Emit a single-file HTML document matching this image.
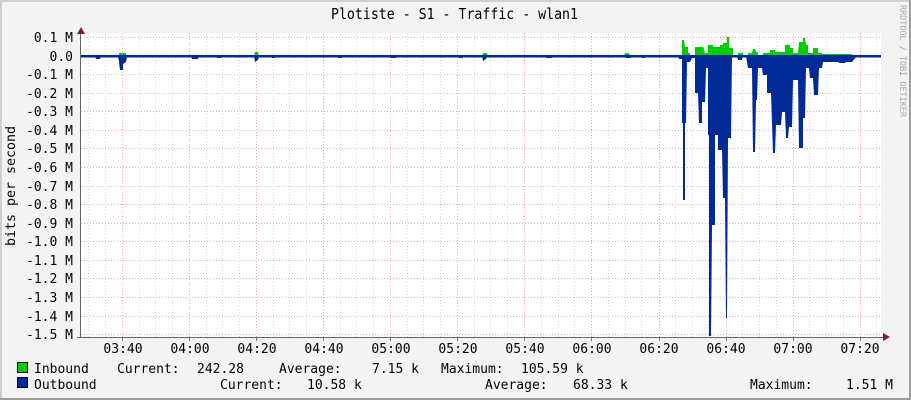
<!DOCTYPE html>
<html><head><meta charset="utf-8">
<style>
html,body{margin:0;padding:0;background:#f3f3f3;}
svg{display:block;}
text{font-family:"DejaVu Sans Mono","Liberation Mono",monospace;fill:#000;}
</style></head>
<body>
<svg width="911" height="400" viewBox="0 0 911 400" xmlns="http://www.w3.org/2000/svg">
<rect x="0" y="0" width="911" height="400" fill="#f3f3f3"/>
<rect x="0" y="0" width="911" height="2" fill="#cfcfcf"/>
<rect x="0" y="0" width="2" height="400" fill="#cfcfcf"/>
<rect x="0" y="398" width="911" height="2" fill="#9c9c9c"/>
<rect x="909" y="0" width="2" height="400" fill="#9c9c9c"/>

<text x="331" y="19" font-size="15" textLength="247" lengthAdjust="spacingAndGlyphs">Plotiste - S1 - Traffic - wlan1</text>
<text transform="translate(900,5) rotate(90)" font-size="8.5" fill="#a8a8a8" style="fill:#a8a8a8" textLength="112" lengthAdjust="spacingAndGlyphs">RRDTOOL / TOBI OETIKER</text>

<rect x="81" y="33" width="800" height="305" fill="#fff"/>

<g id="grid" stroke-width="1" shape-rendering="crispEdges">
<!-- minor vertical -->
<g stroke="#d8d8d8" stroke-dasharray="1,2">
<line x1="88.5" y1="33" x2="88.5" y2="337"/><line x1="105.5" y1="33" x2="105.5" y2="337"/>
<line x1="139.5" y1="33" x2="139.5" y2="337"/><line x1="155.5" y1="33" x2="155.5" y2="337"/><line x1="172.5" y1="33" x2="172.5" y2="337"/>
<line x1="206.5" y1="33" x2="206.5" y2="337"/><line x1="222.5" y1="33" x2="222.5" y2="337"/><line x1="239.5" y1="33" x2="239.5" y2="337"/>
<line x1="273.5" y1="33" x2="273.5" y2="337"/><line x1="289.5" y1="33" x2="289.5" y2="337"/><line x1="306.5" y1="33" x2="306.5" y2="337"/>
<line x1="340.5" y1="33" x2="340.5" y2="337"/><line x1="356.5" y1="33" x2="356.5" y2="337"/><line x1="373.5" y1="33" x2="373.5" y2="337"/>
<line x1="407.5" y1="33" x2="407.5" y2="337"/><line x1="423.5" y1="33" x2="423.5" y2="337"/><line x1="440.5" y1="33" x2="440.5" y2="337"/>
<line x1="474.5" y1="33" x2="474.5" y2="337"/><line x1="490.5" y1="33" x2="490.5" y2="337"/><line x1="507.5" y1="33" x2="507.5" y2="337"/>
<line x1="541.5" y1="33" x2="541.5" y2="337"/><line x1="558.5" y1="33" x2="558.5" y2="337"/><line x1="574.5" y1="33" x2="574.5" y2="337"/>
<line x1="608.5" y1="33" x2="608.5" y2="337"/><line x1="625.5" y1="33" x2="625.5" y2="337"/><line x1="641.5" y1="33" x2="641.5" y2="337"/>
<line x1="675.5" y1="33" x2="675.5" y2="337"/><line x1="692.5" y1="33" x2="692.5" y2="337"/><line x1="708.5" y1="33" x2="708.5" y2="337"/>
<line x1="742.5" y1="33" x2="742.5" y2="337"/><line x1="759.5" y1="33" x2="759.5" y2="337"/><line x1="776.5" y1="33" x2="776.5" y2="337"/>
<line x1="809.5" y1="33" x2="809.5" y2="337"/><line x1="826.5" y1="33" x2="826.5" y2="337"/><line x1="843.5" y1="33" x2="843.5" y2="337"/>
<line x1="876.5" y1="33" x2="876.5" y2="337"/>
</g>
<!-- major vertical -->
<g stroke="#f2a8a8" stroke-dasharray="1,2">
<line x1="122.5" y1="33" x2="122.5" y2="337"/><line x1="189.5" y1="33" x2="189.5" y2="337"/><line x1="256.5" y1="33" x2="256.5" y2="337"/>
<line x1="323.5" y1="33" x2="323.5" y2="337"/><line x1="390.5" y1="33" x2="390.5" y2="337"/><line x1="457.5" y1="33" x2="457.5" y2="337"/>
<line x1="524.5" y1="33" x2="524.5" y2="337"/><line x1="591.5" y1="33" x2="591.5" y2="337"/><line x1="659.5" y1="33" x2="659.5" y2="337"/>
<line x1="726.5" y1="33" x2="726.5" y2="337"/><line x1="793.5" y1="33" x2="793.5" y2="337"/><line x1="860.5" y1="33" x2="860.5" y2="337"/>
</g>
<!-- horizontal -->
<g stroke="#f2a8a8" stroke-dasharray="1,2">
<line x1="81" y1="37.5" x2="881" y2="37.5"/><line x1="81" y1="74.5" x2="881" y2="74.5"/>
<line x1="81" y1="93.5" x2="881" y2="93.5"/><line x1="81" y1="111.5" x2="881" y2="111.5"/><line x1="81" y1="130.5" x2="881" y2="130.5"/>
<line x1="81" y1="148.5" x2="881" y2="148.5"/><line x1="81" y1="167.5" x2="881" y2="167.5"/><line x1="81" y1="186.5" x2="881" y2="186.5"/>
<line x1="81" y1="204.5" x2="881" y2="204.5"/><line x1="81" y1="223.5" x2="881" y2="223.5"/><line x1="81" y1="241.5" x2="881" y2="241.5"/>
<line x1="81" y1="260.5" x2="881" y2="260.5"/><line x1="81" y1="278.5" x2="881" y2="278.5"/><line x1="81" y1="297.5" x2="881" y2="297.5"/>
<line x1="81" y1="316.5" x2="881" y2="316.5"/><line x1="81" y1="334.5" x2="881" y2="334.5"/>
</g>
</g>

<!-- inbound -->
<g fill="#00cc00">
<path d="M679,56 L682,56 L682,40 L684,40 L685,47 L688,47 L688,53 L690,53 L690,56 Z"/>
<path d="M695,56 L695,47 L703,47 L704,49 L705,53 L708,53 L708,45 L713,45 L713,47 L720,47 L720,45 L723,45 L723,43 L727,43 L727,37 L729,37 L729,48 L733,48 L733,56 Z"/>
<path d="M738,56 L738,53 L743,53 L743,56 Z"/>
<path d="M748,56 L748,53 L752,53 L753,49 L755,49 L756,52 L758,52 L758,55 L763,55 L763,53 L770,53 L770,50 L775,50 L775,52 L785,52 L785,45 L790,45 L790,48 L793,48 L793,53 L798,53 L799,42 L803,42 L803,38 L805,38 L806,45 L808,45 L808,53 L813,53 L813,48 L818,48 L818,53 L822,53 L822,54 L852,54 L852,56 Z"/>
<path d="M119,56 L119,53 L126,53 L126,56 Z M94,56 L94,55 L101,55 L101,56 Z M188,56 L188,55 L196,55 L196,56 Z M236,56 L236,55 L243,55 L243,56 Z M254,56 L255,52 L258,52 L259,56 Z M275,56 L275,55 L278,55 L278,56 Z M392,56 L392,55 L396,55 L396,56 Z M482,56 L483,53 L487,53 L488,56 Z M624,56 L625,53 L629,53 L630,56 Z M636,56 L636,55 L640,55 L640,56 Z M547,56 L547,55 L552,55 L552,56 Z"/>
</g>

<!-- outbound -->
<g fill="#002a97">
<path d="M676,56 L678,56 L679,59 L682,59 L682,123 L683,123 L683,200 L685,200 L685,123 L686,123 L687,62 L690,62 L692,58 L695,58 L695,93 L698,93 L699,123 L702,123 L702,102 L705,102 L706,68 L708,68 L708,135 L709,135 L709,336 L711,336 L712,225 L715,225 L715,135 L718,135 L718,150 L722,150 L723,198 L725,198 L726,318 L727,318 L728,138 L731,138 L732,56 Z"/>
<path d="M737,56 L738,60 L742,60 L743,56 Z"/>
<path d="M746,56 L748,68 L752,68 L753,152 L755,152 L756,100 L757,100 L758,68 L762,68 L763,75 L767,75 L767,93 L771,93 L773,153 L775,153 L776,125 L781,125 L782,112 L785,112 L786,138 L788,138 L789,127 L792,127 L793,80 L798,80 L799,148 L803,148 L803,118 L805,118 L806,68 L809,68 L810,78 L813,78 L814,95 L818,95 L819,68 L822,68 L823,62 L838,62 L840,63 L845,63 L846,62 L852,62 L857,56 Z"/>
<path d="M118,56 L119,62 L120,70 L123,70 L123,64 L126,62 L127,56 Z M95,56 L96,59 L100,59 L101,56 Z M191,56 L192,59 L198,59 L199,56 Z M216,56 L217,58 L221,58 L222,56 Z M254,56 L255,62 L258,60 L259,56 Z M271,56 L272,58 L275,58 L276,56 Z M338,56 L338,58 L342,58 L342,56 Z M391,56 L391,58 L396,58 L396,56 Z M459,56 L459,58 L463,58 L463,56 Z M482,56 L483,61 L486,59 L487,56 Z M546,56 L546,58 L552,58 L552,56 Z M626,56 L626,58 L631,58 L631,56 Z M641,56 L642,58 L645,58 L646,56 Z"/>
<rect x="81" y="55" width="800" height="2.5"/>
</g>

<!-- axes -->
<g fill="#666" shape-rendering="crispEdges">
<rect x="80" y="32" width="1" height="306"/>
<rect x="77" y="337" width="806" height="1"/>
</g>
<g stroke="#777" shape-rendering="crispEdges">
<line x1="122.5" y1="338" x2="122.5" y2="341"/><line x1="189.5" y1="338" x2="189.5" y2="341"/><line x1="256.5" y1="338" x2="256.5" y2="341"/>
<line x1="323.5" y1="338" x2="323.5" y2="341"/><line x1="390.5" y1="338" x2="390.5" y2="341"/><line x1="457.5" y1="338" x2="457.5" y2="341"/>
<line x1="524.5" y1="338" x2="524.5" y2="341"/><line x1="591.5" y1="338" x2="591.5" y2="341"/><line x1="659.5" y1="338" x2="659.5" y2="341"/>
<line x1="726.5" y1="338" x2="726.5" y2="341"/><line x1="793.5" y1="338" x2="793.5" y2="341"/><line x1="860.5" y1="338" x2="860.5" y2="341"/>
</g>
<polygon points="77,34 85,34 81,27" fill="#8b1a1a"/>
<polygon points="883,333 883,341 890,337" fill="#8b1a1a"/>

<!-- y labels -->
<g font-size="13" text-anchor="end">
<text x="73" y="42">0.1 M</text>
<text x="73" y="61">0.0</text>
<text x="73" y="79">-0.1 M</text>
<text x="73" y="98">-0.2 M</text>
<text x="73" y="116">-0.3 M</text>
<text x="73" y="135">-0.4 M</text>
<text x="73" y="153">-0.5 M</text>
<text x="73" y="172">-0.6 M</text>
<text x="73" y="191">-0.7 M</text>
<text x="73" y="209">-0.8 M</text>
<text x="73" y="228">-0.9 M</text>
<text x="73" y="246">-1.0 M</text>
<text x="73" y="265">-1.1 M</text>
<text x="73" y="283">-1.2 M</text>
<text x="73" y="302">-1.3 M</text>
<text x="73" y="321">-1.4 M</text>
<text x="73" y="339">-1.5 M</text>
</g>
<text transform="translate(15,246) rotate(-90)" font-size="13" textLength="120" lengthAdjust="spacingAndGlyphs">bits per second</text>

<!-- x labels -->
<g font-size="13" text-anchor="middle">
<text x="123" y="353">03:40</text><text x="190" y="353">04:00</text><text x="257" y="353">04:20</text>
<text x="324" y="353">04:40</text><text x="391" y="353">05:00</text><text x="458" y="353">05:20</text>
<text x="525" y="353">05:40</text><text x="592" y="353">06:00</text><text x="659" y="353">06:20</text>
<text x="726" y="353">06:40</text><text x="793" y="353">07:00</text><text x="860" y="353">07:20</text>
</g>

<!-- legend -->
<rect x="17.5" y="362.5" width="10" height="10" fill="#00cc00" stroke="#000"/>
<rect x="17.5" y="377.5" width="10" height="10" fill="#002a97" stroke="#000"/>
<g font-size="13">
<text x="34" y="373">Inbound</text>
<text x="117" y="373">Current:</text>
<text x="197" y="373">242.28</text>
<text x="279" y="373">Average:</text>
<text x="372" y="373">7.15 k</text>
<text x="441" y="373">Maximum:</text>
<text x="521" y="373">105.59 k</text>
<text x="34" y="389">Outbound</text>
<text x="220" y="389">Current:</text>
<text x="307" y="389">10.58 k</text>
<text x="485" y="389">Average:</text>
<text x="573" y="389">68.33 k</text>
<text x="750" y="389">Maximum:</text>
<text x="846" y="389">1.51 M</text>
</g>
</svg>
</body></html>
